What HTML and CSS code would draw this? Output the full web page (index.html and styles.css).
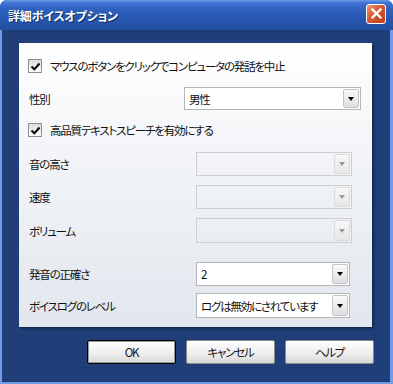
FILE: index.html
```html
<!DOCTYPE html>
<html>
<head>
  <meta charset="utf-8">
  <link rel="stylesheet" href="styles.css">
  <title>詳細ボイスオプション</title>
</head>
<body>
  <div class="window">
    <div class="titlebar">
      <span class="title">詳細ボイスオプション</span>
      <span class="close">
        <svg width="11" height="11" viewBox="0 0 11 11"><path d="M1.5 1.5 L9.5 9.5 M9.5 1.5 L1.5 9.5" stroke="#fff" stroke-width="2.4" stroke-linecap="square"/></svg>
      </span>
    </div>
    <div class="frame">
      <div class="panel">
        <div class="row r1">
          <span class="check"><svg width="11" height="11" viewBox="0 0 11 11"><path d="M1.5 5.5 L4.3 8.3 L9.5 2.5" fill="none" stroke="#000" stroke-width="2"/></svg></span>
          <span class="cklabel">マウスのボタンをクリックでコンピュータの発話を中止</span>
        </div>
        <div class="row r2">
          <span class="label wide">性別</span>
          <div class="select big"><span class="val">男性</span><span class="arrow"></span></div>
        </div>
        <div class="row r3">
          <span class="check"><svg width="11" height="11" viewBox="0 0 11 11"><path d="M1.5 5.5 L4.3 8.3 L9.5 2.5" fill="none" stroke="#000" stroke-width="2"/></svg></span>
          <span class="cklabel">高品質テキストスピーチを有効にする</span>
        </div>
        <div class="row r4">
          <span class="label">音の高さ</span>
          <div class="select dis"><span class="val"></span><span class="arrow"></span></div>
        </div>
        <div class="row r5">
          <span class="label">速度</span>
          <div class="select dis"><span class="val"></span><span class="arrow"></span></div>
        </div>
        <div class="row r6">
          <span class="label">ボリューム</span>
          <div class="select dis"><span class="val"></span><span class="arrow"></span></div>
        </div>
        <div class="row r7">
          <span class="label">発音の正確さ</span>
          <div class="select sm"><span class="val">2</span><span class="arrow"></span></div>
        </div>
        <div class="row r8">
          <span class="label">ボイスログのレベル</span>
          <div class="select sm"><span class="val">ログは無効にされています</span><span class="arrow"></span></div>
        </div>
      </div>
      <div class="buttons">
        <button class="btn default">OK</button>
        <button class="btn">キャンセル</button>
        <button class="btn">ヘルプ</button>
      </div>
    </div>
  </div>
</body>
</html>
```

FILE: styles.css
```css
html, body { margin: 0; padding: 0; }
body {
  width: 393px;
  height: 384px;
  overflow: hidden;
  background: #fff;
  font-family: "Noto Sans CJK JP", "Liberation Sans", sans-serif;
  font-size: 11.5px;
  letter-spacing: -1.2px;
  font-feature-settings: "palt";
  color: #111;
  white-space: nowrap;
}

.window {
  width: 393px;
  height: 384px;
  box-sizing: border-box;
  border-radius: 7px 7px 0 0;
  background: #0d3a8c;
  display: flex;
  flex-direction: column;
  overflow: hidden;
}

.titlebar {
  height: 30px;
  flex: none;
  display: flex;
  align-items: center;
  padding: 0 7px 0 8px;
  background: linear-gradient(#6e9ae6 0, #3f72d2 3px, #2d60bd 10px, #2656ad 20px, #224e9f 30px);
}
.title {
  color: #fff;
  font-weight: bold;
  font-size: 12px;
  letter-spacing: -0.2px;
  text-shadow: 1px 1px 0 #0c2e6e;
  flex: 1;
}
.close {
  width: 18px;
  height: 18px;
  border: 1px solid #fff;
  border-radius: 3px;
  background: linear-gradient(135deg, #ee9a78, #d9582f 45%, #c03c17);
  display: flex;
  align-items: center;
  justify-content: center;
  margin-bottom: 3px;
}

.frame {
  flex: 1;
  border-left: 2px solid #6f9ce8;
  border-right: 3px solid #6f9ce8;
  border-bottom: 2px solid #6f9ce8;
  background: repeating-linear-gradient(#22427f 0, #22427f 1px, #1d3a73 1px, #1d3a73 2px);
  padding: 13px 18px 0 17px;
}

.panel {
  height: 284px;
  box-sizing: border-box;
  background: linear-gradient(#ffffff, #f2f4f7 40%, #e2e7ee);
  box-shadow: 2px 2px 2px rgba(0, 0, 0, 0.35);
  padding: 14px 0 0 10px;
}

.row {
  display: flex;
  align-items: center;
}
.r1 { height: 18px; }
.r2 { height: 23px; margin-top: 12px; }
.r3 { height: 18px; margin-top: 11px; }
.r4 { height: 24px; margin-top: 13px; }
.r5 { height: 24px; margin-top: 9px; }
.r6 { height: 25px; margin-top: 9px; }
.r7 { height: 24px; margin-top: 19px; }
.r8 { height: 25px; margin-top: 7px; }

.check {
  width: 12px;
  height: 12px;
  margin: 0 8px 0 -1px;
  border: 1px solid #8f8f8f;
  background: linear-gradient(#dcdcdc, #ffffff);
  display: flex;
  align-items: center;
  justify-content: center;
}

.label { width: 167px; flex: none; }
.label.wide { width: 155px; }

.select {
  height: 100%;
  box-sizing: border-box;
  border: 1px solid #b5b5b5;
  background: #fff;
  display: flex;
  align-items: center;
  padding: 1px;
}
.select.big { width: 177px; }
.select.dis { width: 156px; background: transparent; border-color: #cfcfcf; }
.select.sm { width: 154px; }

.val { flex: 1; padding-left: 3px; overflow: hidden; }

.arrow {
  width: 16px;
  height: 100%;
  flex: none;
  box-sizing: border-box;
  border: 1px solid #c4c4c4;
  border-radius: 2px;
  background: linear-gradient(#fafafa, #dedede);
  position: relative;
}
.arrow::after {
  content: "";
  position: absolute;
  left: 4px;
  top: 50%;
  margin-top: -2px;
  border-left: 3.5px solid transparent;
  border-right: 3.5px solid transparent;
  border-top: 4px solid #000;
}
.dis .arrow { border-color: #dadada; background: linear-gradient(#f8f8f8, #e6e6e6); }
.dis .arrow::after { border-top-color: #9a9a9a; }

.buttons {
  display: flex;
  justify-content: flex-end;
  gap: 10px;
  margin-top: 13px;
  margin-right: -2px;
}
.btn {
  width: 89px;
  height: 24px;
  box-sizing: border-box;
  font-family: inherit;
  font-size: 11.5px;
  letter-spacing: -1.2px;
  font-feature-settings: "palt";
  color: #111;
  border: 1px solid #8a8a8a;
  border-radius: 2px;
  background: linear-gradient(#ffffff, #ececec 60%, #d6d6d6);
  padding: 0;
}
.btn.default {
  border: 1px solid #000;
  box-shadow: inset 0 0 0 1px #9a9a9a;
}
```
